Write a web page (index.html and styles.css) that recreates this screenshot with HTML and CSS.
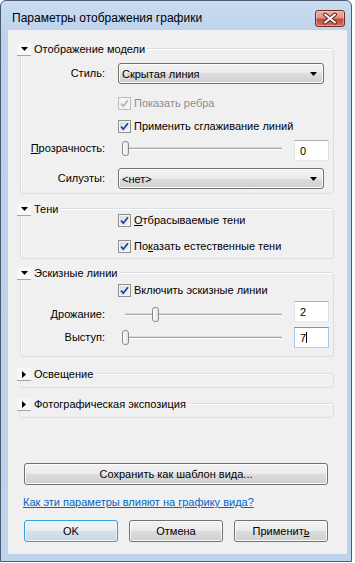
FILE: index.html
```html
<!DOCTYPE html>
<html lang="ru">
<head>
    <meta charset="UTF-8">
    <title>Параметры отображения графики</title>
    <link rel="stylesheet" href="styles.css">
</head>
<body>
    <div class="window">
        <div class="titlebar">
            <span class="title">Параметры отображения графики</span>
            <button class="close">
                <svg width="28" height="15" viewBox="0 0 28 15">
                    <path d="M9 3.5 L19 11.5 M19 3.5 L9 11.5" stroke="#5a2420" stroke-width="4" stroke-linecap="round"/>
                    <path d="M9 3.5 L19 11.5 M19 3.5 L9 11.5" stroke="#fff" stroke-width="2" stroke-linecap="round"/>
                </svg>
            </button>
        </div>

        <div class="client">
            <!-- Отображение модели -->
            <section class="group group-first">
                <div class="group-head">
                    <span class="toggle"><svg width="7" height="4" viewBox="0 0 7 4"><polygon points="0,0 7,0 3.5,4" fill="#000"/></svg></span>
                    <span>Отображение модели</span>
                </div>
                <div class="field mt-14">
                    <span class="label">Стиль:</span>
                    <div class="combo"><span>Скрытая линия</span><svg width="7" height="4" viewBox="0 0 7 4"><polygon points="0,0 7,0 3.5,4" fill="#000"/></svg></div>
                </div>
                <div class="check-row disabled mt-13">
                    <span class="check"><svg width="11" height="11" viewBox="0 0 11 11"><path d="M2 5.5 L4.3 8.2 L9 2.3" fill="none" stroke="#b4b4b4" stroke-width="1.8"/></svg></span>
                    <span>Показать ребра</span>
                </div>
                <div class="check-row mt-10">
                    <span class="check"><svg width="11" height="11" viewBox="0 0 11 11"><path d="M2 5.5 L4.3 8.2 L9 2.3" fill="none" stroke="#25419a" stroke-width="1.8"/></svg></span>
                    <span>Применить сглаживание линий</span>
                </div>
                <div class="field lift mt-7">
                    <span class="label"><u>П</u>розрачность:</span>
                    <div class="slider"><div class="track"></div><span class="thumb" style="left: 4px"></span></div>
                    <div class="num">0</div>
                </div>
                <div class="field mt-7">
                    <span class="label">Силуэты:</span>
                    <div class="combo"><span>&lt;нет&gt;</span><svg width="7" height="4" viewBox="0 0 7 4"><polygon points="0,0 7,0 3.5,4" fill="#000"/></svg></div>
                </div>
            </section>

            <!-- Тени -->
            <section class="group group-shadows">
                <div class="group-head">
                    <span class="toggle"><svg width="7" height="4" viewBox="0 0 7 4"><polygon points="0,0 7,0 3.5,4" fill="#000"/></svg></span>
                    <span>Тени</span>
                </div>
                <div class="check-row mt-5">
                    <span class="check"><svg width="11" height="11" viewBox="0 0 11 11"><path d="M2 5.5 L4.3 8.2 L9 2.3" fill="none" stroke="#25419a" stroke-width="1.8"/></svg></span>
                    <span><u>О</u>тбрасываемые тени</span>
                </div>
                <div class="check-row mt-13">
                    <span class="check"><svg width="11" height="11" viewBox="0 0 11 11"><path d="M2 5.5 L4.3 8.2 L9 2.3" fill="none" stroke="#25419a" stroke-width="1.8"/></svg></span>
                    <span>По<u>к</u>азать естественные тени</span>
                </div>
            </section>

            <!-- Эскизные линии -->
            <section class="group group-sketch">
                <div class="group-head">
                    <span class="toggle"><svg width="7" height="4" viewBox="0 0 7 4"><polygon points="0,0 7,0 3.5,4" fill="#000"/></svg></span>
                    <span>Эскизные линии</span>
                </div>
                <div class="check-row mt-11">
                    <span class="check"><svg width="11" height="11" viewBox="0 0 11 11"><path d="M2 5.5 L4.3 8.2 L9 2.3" fill="none" stroke="#25419a" stroke-width="1.8"/></svg></span>
                    <span>Включить эскизные линии</span>
                </div>
                <div class="field drop mt-4">
                    <span class="label">Дрожание:</span>
                    <div class="slider"><div class="track"></div><span class="thumb" style="left: 34px"></span></div>
                    <div class="num">2</div>
                </div>
                <div class="field mt-5">
                    <span class="label">Выступ:</span>
                    <div class="slider"><div class="track"></div><span class="thumb" style="left: 4px"></span></div>
                    <div class="num focus">7<span class="caret"></span></div>
                </div>
            </section>

            <!-- свернутые -->
            <section class="group group-closed group-light">
                <div class="group-head">
                    <span class="toggle"><svg width="4" height="7" viewBox="0 0 4 7"><polygon points="0,0 4,3.5 0,7" fill="#000"/></svg></span>
                    <span>Освещение</span>
                </div>
            </section>
            <section class="group group-closed group-photo">
                <div class="group-head">
                    <span class="toggle"><svg width="4" height="7" viewBox="0 0 4 7"><polygon points="0,0 4,3.5 0,7" fill="#000"/></svg></span>
                    <span>Фотографическая экспозиция</span>
                </div>
            </section>

            <button class="btn save-btn">Сохранить как шаблон вида...</button>
            <a class="help-link" href="#">Как эти параметры влияют на графику вида?</a>

            <div class="actions">
                <button class="btn default">OK</button>
                <button class="btn">Отмена</button>
                <button class="btn">Применит<u>ь</u></button>
            </div>
        </div>
    </div>
</body>
</html>
```

FILE: styles.css
```css
body {
    margin: 0;
    background: #fff;
    font-family: "Liberation Sans", Arial, sans-serif;
    font-size: 11px;
    color: #000;
}

u {
    text-decoration: underline;
    text-underline-offset: 1px;
}

.window {
    width: 352px;
    height: 562px;
    box-sizing: border-box;
    border: 1px solid #4b5a6c;
    border-radius: 6px 6px 0 0;
    background: linear-gradient(#c9dbf0, #bcd2ec 40px, #bed4ed);
    padding: 0 4px 7px 7px;
    display: flex;
    flex-direction: column;
}

.titlebar {
    height: 29px;
    display: flex;
    align-items: flex-start;
}

.title {
    margin: 10px 0 0 4px;
    font-size: 12px;
    line-height: 15px;
}

.close {
    margin: 9px 2px 0 auto;
    width: 30px;
    height: 17px;
    padding: 0;
    border: 1px solid #6e2d27;
    border-radius: 3px;
    background: linear-gradient(#eab0a3, #dc9383 45%, #c44a3c 55%, #d36f5c);
    box-shadow: inset 0 0 0 1px rgba(255, 255, 255, 0.35);
    display: flex;
    align-items: center;
    justify-content: center;
}

.client {
    flex: 1;
    background: #f0f0f0;
    display: flex;
    flex-direction: column;
}

/* группы */
.group {
    width: 314px;
    box-sizing: border-box;
    margin-left: 12px;
    border: 1px solid #d5dfe5;
    border-radius: 3px;
    box-shadow: inset 1px 1px 0 #fff;
    display: flex;
    flex-direction: column;
}

.group-first { margin-top: 18px; padding-bottom: 4px; }
.group-shadows { margin-top: 14px; padding-bottom: 5px; }
.group-sketch { margin-top: 13px; padding-bottom: 8px; }
.group-light { margin-top: 16px; }
.group-photo { margin-top: 15px; }
.group-closed { padding-bottom: 13px; }

.group-head {
    align-self: flex-start;
    display: flex;
    align-items: center;
    gap: 3px;
    height: 13px;
    margin: -6px 0 -7px -4px;
    padding-right: 2px;
    background: #f0f0f0;
    line-height: 13px;
}

.toggle {
    width: 14px;
    height: 12px;
    border-bottom: 1px solid #a5a5a5;
    background: #f7f7f7;
    display: flex;
    align-items: center;
    justify-content: center;
}

.mt-4 { margin-top: 4px; }
.mt-5 { margin-top: 5px; }
.mt-7 { margin-top: 7px; }
.mt-10 { margin-top: 10px; }
.mt-11 { margin-top: 11px; }
.mt-13 { margin-top: 13px; }
.mt-14 { margin-top: 14px; }

/* строки */
.field {
    display: flex;
    align-items: center;
    height: 21px;
}

.label {
    flex: 0 0 97px;
    box-sizing: border-box;
    padding-right: 13px;
    text-align: right;
    line-height: 13px;
}

.field.lift .label,
.field.lift .slider {
    margin-bottom: 5px;
}

.field.drop .label,
.field.drop .slider {
    margin-top: 5px;
}

.check-row {
    display: flex;
    align-items: center;
    gap: 3px;
    height: 13px;
    padding-left: 97px;
    line-height: 13px;
}

.check-row.disabled {
    color: #8f8f8f;
}

.check {
    width: 13px;
    height: 13px;
    box-sizing: border-box;
    border: 1px solid #8e8f8f;
    background: linear-gradient(135deg, #d6d9de, #f7f7f8);
    box-shadow: inset 0 0 0 1px #f4f4f4;
}

.check svg {
    display: block;
}

.disabled .check {
    border-color: #bcbcbc;
    background: #f4f4f4;
}

.combo {
    width: 206px;
    height: 21px;
    box-sizing: border-box;
    border: 1px solid #707070;
    border-radius: 3px;
    background: linear-gradient(#f2f2f2, #ebebeb 50%, #dddddd 50%, #cfcfcf);
    box-shadow: inset 0 0 0 1px #fcfcfc;
    padding: 0 6px 0 3px;
    display: flex;
    align-items: center;
    justify-content: space-between;
}

/* ползунки */
.slider {
    position: relative;
    width: 172px;
    height: 15px;
    display: flex;
    align-items: center;
}

.track {
    flex: 1;
    margin: 0 8px 0 7px;
    height: 1px;
    background: #a6a6a6;
    box-shadow: 0 1px 0 #fff, 0 -1px 0 #dcdcdc;
}

.thumb {
    position: absolute;
    top: 0;
    width: 7px;
    height: 15px;
    box-sizing: border-box;
    border: 1px solid #8a8a8a;
    border-radius: 3px;
    background: linear-gradient(90deg, #fdfdfd, #e4e4e4);
}

.num {
    width: 35px;
    height: 21px;
    box-sizing: border-box;
    margin-left: 4px;
    border: 1px solid;
    border-color: #abadb3 #dbdfe6 #e3e9ef #e2e3ea;
    background: #fff;
    padding-left: 5px;
    display: flex;
    align-items: center;
}

.num.focus {
    border-color: #5c9ddc #a4c9e9 #b5d2ee #a4c9e9;
}

.caret {
    width: 1px;
    height: 11px;
    background: #000;
}

/* кнопки */
.btn {
    height: 22px;
    box-sizing: border-box;
    border: 1px solid #707070;
    border-radius: 3px;
    background: linear-gradient(#f2f2f2, #ebebeb 50%, #dddddd 50%, #cfcfcf);
    box-shadow: inset 0 0 0 1px #fcfcfc;
    font-family: inherit;
    font-size: 11px;
    color: #000;
    padding: 0;
}

.btn.default {
    border-color: #3b9ddd;
    background: linear-gradient(#f0f4f7, #e6edf2 50%, #d6e1e9 50%, #cad8e2);
    box-shadow: inset 0 0 0 1px #e8f4fb;
}

.save-btn {
    margin: auto 0 0 16px;
    width: 304px;
}

.help-link {
    margin: 11px 0 0 15px;
    align-self: flex-start;
    line-height: 13px;
    color: #0066cc;
    text-decoration: underline;
}

.actions {
    display: flex;
    gap: 11px;
    margin: 11px 0 12px 16px;
}

.actions .btn {
    width: 94px;
}
```
